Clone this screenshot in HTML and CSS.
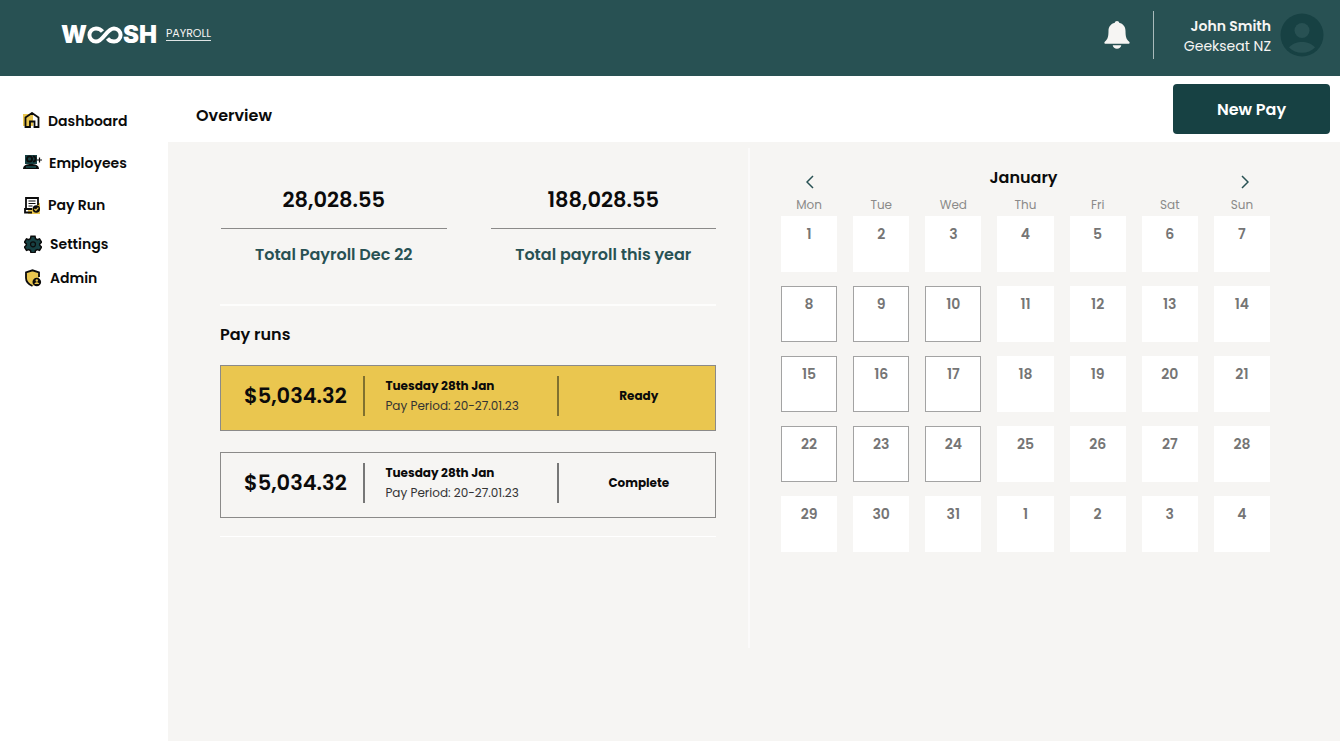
FILE: index.html
```html
<!DOCTYPE html>
<html lang="en">
<head>
<meta charset="utf-8">
<meta name="viewport" content="width=device-width, initial-scale=1">
<title>Woosh Payroll – Overview</title>
<link rel="stylesheet" href="styles.css">
</head>
<body>
<header class="topbar">
  <a class="brand" href="#">
    <span class="brand-name">W<svg class="brand-loop" viewBox="0 0 36 18" aria-hidden="true"><path d="M15.500 5.500C14 3.600 12 2.400 9 2.400a6.600 6.600 0 0 0 0 13.200c7.500 0 10.500-13.200 18-13.200a6.600 6.600 0 0 1 0 13.200c-3 0-5-1.200-6.500-3.100"/></svg>SH</span>
    <span class="brand-product">PAYROLL</span>
  </a>
  <div class="account">
    <button class="icon-button" type="button" aria-label="Notifications">
      <svg class="bell" viewBox="0 0 26 28" aria-hidden="true"><path d="M13 0c1.300 0 2 .8 2.200 1.700 4 1 6.300 4 6.300 8.300 0 6 1 8.500 3.500 10.500 1.200 1.200.7 2.300-.8 2.300H1.800c-1.500 0-2-1.100-.8-2.300C3.500 18.500 4.500 16 4.500 10c0-4.300 2.300-7.300 6.300-8.300C11 .8 11.700 0 13 0zM8.700 24.300h8.600c-.4 2-2 3.500-4.300 3.500s-3.900-1.500-4.300-3.500z"/></svg>
    </button>
    <div class="user">
      <div class="user-text">
        <strong class="user-name">John Smith</strong>
        <span class="user-company">Geekseat NZ</span>
      </div>
      <svg class="avatar" viewBox="0 0 44 44" aria-hidden="true"><circle class="avatar-disc" cx="22" cy="22" r="21.500"/><circle class="avatar-person" cx="22" cy="17.500" r="7.500"/><path class="avatar-person" d="M9 34.500c3.500-4 8-5.500 13-5.500s9.500 1.500 13 5.500c-3.500 3.400-8 5.300-13 5.300S12.500 37.900 9 34.500z"/></svg>
    </div>
  </div>
</header>
<div class="shell">
  <nav class="sidebar" aria-label="Main">
    <ul class="nav-list">
      <li><a class="nav-link" href="#">
        <svg class="nav-icon" viewBox="0 0 18 18" aria-hidden="true"><path class="fill-gold" d="M0 2h10v12H0z"/><path class="line" d="M2.500 5.500L9 1l6.500 4.500V15h-4V9.500H7V15H2.500z"/></svg>
        Dashboard</a></li>
      <li><a class="nav-link" href="#">
        <svg class="nav-icon nav-icon-wide" viewBox="0 0 19 18" aria-hidden="true"><path class="fill-teal" d="M2 1h12v9H2z"/><path class="fill-black" d="M0 15c0-4 4-5 8-5s8 1 8 5z"/><path class="fill-teal" d="M3 12h10v2H3z"/><circle class="line" cx="6.500" cy="5" r="2.600"/><path class="line" d="M10 2.400c3.400 0 3.400 5.200 0 5.200"/><path class="line thin" d="M16.500 3.500v5M14 6h5"/></svg>
        Employees</a></li>
      <li><a class="nav-link" href="#">
        <svg class="nav-icon" viewBox="0 0 18 18" aria-hidden="true"><path class="fill-gold" d="M5 7h12v11H5z"/><path class="fill-white" d="M3 2h11v10H3z"/><path class="line" d="M15 9V2H3v11M9 16.500H2V13h7"/><path class="line thin" d="M5.500 5h7M5.500 7.500h7M5.500 10h4"/><circle class="fill-black" cx="13.300" cy="13" r="3.700"/><path class="check" d="M11.400 13l1.500 1.400 2.500-2.700"/></svg>
        Pay Run</a></li>
    </ul>
    <ul class="nav-list nav-list-secondary">
      <li><a class="nav-link" href="#">
        <svg class="nav-icon" viewBox="0 0 18 18" aria-hidden="true"><path class="gear" d="M7 1.200h4l.5 2.400 1.700 1 2.300-.8 2 3.400-1.800 1.700v1.400l1.800 1.700-2 3.400-2.300-.8-1.700 1-.5 2.200H7l-.5-2.200-1.700-1-2.300.8-2-3.400 1.800-1.700V8.900L.5 7.200l2-3.400 2.300.8 1.700-1z"/><circle class="line thin" cx="9" cy="9.300" r="2.500"/></svg>
        Settings</a></li>
      <li><a class="nav-link" href="#">
        <svg class="nav-icon" viewBox="0 0 18 18" aria-hidden="true"><path class="fill-gold" d="M2 4l6.500-2.500L15 4v5l-2 6-4 2-5-4-2-4z"/><path class="line" d="M15 8V3.500L8.500 1.300 2 3.500V9c0 4 3 6.500 6.500 8"/><circle class="fill-black" cx="12.800" cy="13" r="4.300"/><circle class="fill-gold" cx="12.800" cy="11.500" r="1.200"/><path class="fill-gold" d="M10.400 15c.7-2.200 4.100-2.200 4.800 0z"/></svg>
        Admin</a></li>
    </ul>
  </nav>
  <main class="main">
    <div class="page-head">
      <h1 class="page-title">Overview</h1>
      <button class="new-pay" type="button">New Pay</button>
    </div>
    <div class="content">
      <section class="summary">
        <dl class="totals">
          <div class="total"><dd class="total-value">28,028.55</dd><dt class="total-label">Total Payroll Dec 22</dt></div>
          <div class="total"><dd class="total-value">188,028.55</dd><dt class="total-label">Total payroll this year</dt></div>
        </dl>
        <div class="runs">
          <h2 class="runs-title">Pay runs</h2>
          <article class="run run-ready">
            <div class="run-amount">$5,034.32</div>
            <div class="run-detail"><strong class="run-date">Tuesday 28th Jan</strong><span class="run-period">Pay Period: 20-27.01.23</span></div>
            <div class="run-status">Ready</div>
          </article>
          <article class="run">
            <div class="run-amount">$5,034.32</div>
            <div class="run-detail"><strong class="run-date">Tuesday 28th Jan</strong><span class="run-period">Pay Period: 20-27.01.23</span></div>
            <div class="run-status">Complete</div>
          </article>
        </div>
      </section>
      <section class="calendar" aria-label="Calendar">
        <div class="month-bar">
          <button class="month-step month-prev" type="button" aria-label="Previous month"><svg class="chevron" viewBox="0 0 8 14" aria-hidden="true"><path d="M7 1L1 7l6 6"/></svg></button>
          <h2 class="month-name">January</h2>
          <button class="month-step month-next" type="button" aria-label="Next month"><svg class="chevron" viewBox="0 0 8 14" aria-hidden="true"><path d="M1 1l6 6-6 6"/></svg></button>
        </div>
        <table class="month">
          <thead><tr><th>Mon</th><th>Tue</th><th>Wed</th><th>Thu</th><th>Fri</th><th>Sat</th><th>Sun</th></tr></thead>
          <tbody>
            <tr><td>1</td><td>2</td><td>3</td><td>4</td><td>5</td><td>6</td><td>7</td></tr>
            <tr><td class="marked">8</td><td class="marked">9</td><td class="marked">10</td><td>11</td><td>12</td><td>13</td><td>14</td></tr>
            <tr><td class="marked">15</td><td class="marked">16</td><td class="marked">17</td><td>18</td><td>19</td><td>20</td><td>21</td></tr>
            <tr><td class="marked">22</td><td class="marked">23</td><td class="marked">24</td><td>25</td><td>26</td><td>27</td><td>28</td></tr>
            <tr><td>29</td><td>30</td><td>31</td><td>1</td><td>2</td><td>3</td><td>4</td></tr>
          </tbody>
        </table>
      </section>
    </div>
  </main>
</div>
</body>
</html>
```

FILE: styles.css
```css
:root {
  --teal: #285153;
  --teal-dark: #174143;
  --gold: #eac64f;
  --paper: #f6f5f3;
  --rule: #8b8a89;
}

* { box-sizing: border-box; }

body {
  margin: 0;
  min-height: 100vh;
  display: flex;
  flex-direction: column;
  background: #fff;
  color: #0b0b0b;
  font-family: Poppins, Inter, "Open Sans", sans-serif;
  font-size: 14px;
  line-height: 20px;
}

h1, h2, dl, dd, ul { margin: 0; padding: 0; }
ul { list-style: none; }
a { color: inherit; text-decoration: none; }
button { border: 0; padding: 0; background: none; color: inherit; font: inherit; cursor: pointer; }
svg { display: block; flex: none; }

/* Top bar */
.topbar {
  display: flex;
  justify-content: space-between;
  align-items: center;
  min-height: 76px;
  padding: 0 16px 6px 61px;
  background: var(--teal);
  color: var(--paper);
}
.brand { display: flex; align-items: center; gap: 9px; }
.brand-name { display: flex; align-items: center; font-family: Inter, sans-serif; font-size: 24px; font-weight: 900; line-height: 24px; color: #fff; }
.brand-loop { width: 36px; height: 18px; fill: none; stroke: #fff; stroke-width: 4; }
.brand-product { margin-bottom: 4px; border-bottom: 1px solid #dfe5e5; font-size: 11px; line-height: 14px; }
.account { display: flex; align-items: center; gap: 23px; }
.bell { width: 26px; height: 28px; fill: var(--paper); }
.user {
  display: flex;
  align-items: center;
  gap: 9px;
  padding-left: 30px;
  border-left: 1px solid #a9babb;
  min-height: 48px;
}
.user-text { display: flex; flex-direction: column; padding-top: 2px; text-align: right; }
.user-name { font-weight: 600; }
.avatar { width: 44px; height: 44px; }
.avatar-disc { fill: var(--teal-dark); }
.avatar-person { fill: var(--teal); }

/* Sidebar */
.shell { flex: 1; display: flex; }
.sidebar { flex: 0 0 168px; padding: 35px 0 0 23px; }
.nav-list { display: flex; flex-direction: column; gap: 22px; }
.nav-list-secondary { gap: 14px; margin-top: 19px; padding-left: 1px; }
.nav-link { display: flex; align-items: center; gap: 7px; font-weight: 600; }
.nav-icon { width: 18px; height: 18px; }
.nav-icon-wide { width: 19px; }
.nav-list-secondary .nav-link { gap: 8px; }
.line { fill: none; stroke: #0b0b0b; stroke-width: 1.800; }
.thin { stroke-width: 1.200; }
.check { fill: none; stroke: var(--gold); stroke-width: 1.200; }
.gear { fill: var(--teal-dark); stroke: #0b0b0b; stroke-width: 1.500; }
.fill-gold { fill: var(--gold); }
.fill-teal { fill: var(--teal-dark); }
.fill-white { fill: #fff; }
.fill-black { fill: #0b0b0b; }

/* Page */
.main { flex: 1; display: flex; flex-direction: column; min-width: 0; }
.page-head {
  display: flex;
  justify-content: space-between;
  align-items: center;
  min-height: 66px;
  padding: 0 10px 0 28px;
}
.page-title { padding-top: 13px; font-size: 16px; font-weight: 600; }
.new-pay { width: 157px; height: 50px; padding-top: 2px; border-radius: 4px; background: var(--teal-dark); color: #fff; font-size: 16px; font-weight: 600; }
.content {
  flex: 1;
  display: grid;
  grid-template-columns: 580fr 592fr;
  align-items: start;
  padding-top: 6px;
  background: var(--paper);
}

/* Totals and pay runs */
.summary { padding: 38px 32px 0 52px; }
.totals { display: grid; grid-template-columns: 1fr 1fr; gap: 44px; padding: 0 0 39px 1px; border-bottom: 2px solid #fdfdfc; }
.total { text-align: center; }
.total-value { padding-bottom: 14px; border-bottom: 1px solid var(--rule); font-size: 21px; font-weight: 600; line-height: 28px; }
.total-label { padding-top: 16px; color: var(--teal); font-size: 16px; font-weight: 600; }
.runs { display: flex; flex-direction: column; gap: 21px; padding: 19px 0 18px; border-bottom: 1px solid #fff; }
.runs-title { margin-bottom: -1px; font-size: 16px; font-weight: 600; }
.run {
  display: grid;
  grid-template-columns: 143fr 196fr 157fr;
  align-items: center;
  min-height: 66px;
  padding-bottom: 4px;
  border: 1px solid var(--rule);
}
.run-ready { background: var(--gold); }
.run-amount { padding-left: 23px; font-size: 21px; font-weight: 600; line-height: 28px; }
.run-detail {
  display: flex;
  flex-direction: column;
  justify-content: center;
  min-height: 39px;
  padding-left: 20px;
  border: solid #777;
  border-width: 0 2px;
}
.run-ready .run-detail { border-color: #80702f; }
.run-date { font-size: 12px; font-weight: 700; }
.run-period { color: #333; font-size: 12px; }
.run-status { padding-left: 4px; text-align: center; font-size: 12px; font-weight: 700; }

/* Calendar */
.calendar { min-height: 500px; padding: 20px 70px 0 31px; border-left: 2px solid #fbfafa; }
.month-bar, .month tr { display: grid; grid-template-columns: repeat(7, 1fr); column-gap: 16px; }
.month-bar { align-items: start; justify-items: center; }
.month-step { padding: 7px 6px 0 10px; color: var(--teal); }
.month-next { grid-column: 7; }
.month-name { grid-column: 4; padding-right: 4px; font-size: 16px; font-weight: 600; line-height: 20px; }
.chevron { width: 8px; height: 14px; fill: none; stroke: currentColor; stroke-width: 1.500; }
.month, .month thead { display: block; }
.month th { padding: 6px 0 1px; color: #8b8a89; font-size: 12px; font-weight: 400; }
.month tbody { display: grid; row-gap: 14px; }
.month td { height: 56px; padding: 7px 0 0; border: 1px solid #fff; background: #fff; color: #757575; text-align: center; font-weight: 600; }
.month .marked { border-color: #a3a3a3; }
```
